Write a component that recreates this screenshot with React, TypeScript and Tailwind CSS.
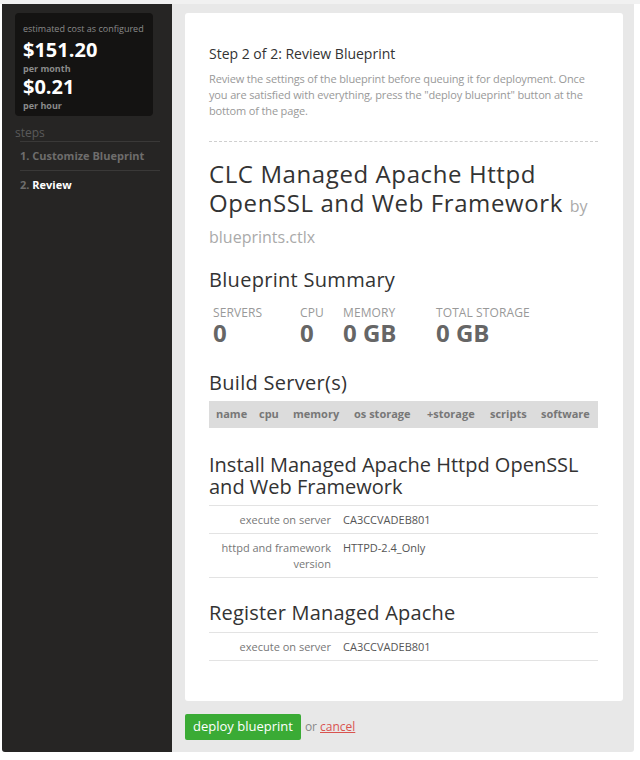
import React from "react";

const font = { fontFamily: '"Open Sans", "Noto Sans", sans-serif' };

function Row({ label, value }: { label: React.ReactNode; value: string }) {
  return (
    <div className="flex border-b border-[#e3e3e3] py-[5.5px] text-[11px] leading-[16px]">
      <div className="w-[122px] shrink-0 text-right text-[#777]">{label}</div>
      <div className="pl-[12px] text-[#555]">{value}</div>
    </div>
  );
}

function Stat({ label, value, w, pl }: { label: string; value: string; w: string; pl?: string }) {
  return (
    <div className={`${w} ${pl ?? ""}`}>
      <div className="text-[12px] leading-[14px] tracking-[0.1px] text-[#999]">{label}</div>
      <div className="text-[24px] font-bold leading-[25px] text-[#666]">{value}</div>
    </div>
  );
}

export default function App() {
  return (
    <div className="min-h-[760px] bg-white" style={font}>
      <div className="h-[4px] bg-[#f1f1f1]" />
      <div className="ml-[2px] flex h-[748px] w-[632px] rounded-b-[3px] bg-[#e8e8e8]">
        <aside className="w-[170px] shrink-0 rounded-bl-[3px] bg-[#262524] pt-[9px]">
          <div className="ml-[13px] w-[138px] rounded-[4px] bg-[#141312] px-[8px] pb-[5px] pt-[10px]">
            <div className="text-[9px] leading-[12px] text-[#8a8a8a]">estimated cost as configured</div>
            <div className="mt-[3px] text-[20px] font-bold leading-[24px] text-white">$151.20</div>
            <div className="mt-[1px] text-[9px] font-bold leading-[11px] text-[#8a8a8a]">per month</div>
            <div className="mt-[1px] text-[20px] font-bold leading-[24px] text-white">$0.21</div>
            <div className="mt-[1px] text-[9px] font-bold leading-[11px] text-[#8a8a8a]">per hour</div>
          </div>
          <div className="ml-[13px] mt-[10px] text-[12px] leading-[14px] text-[#5a5a5a]">steps</div>
          <div className="ml-[18px] mr-[12px] mt-[1px] border-t border-[#3a3938]">
            <div className="border-b border-[#3a3938] py-[6px] text-[11px] font-bold leading-[16px] text-[#6e6d6c]">
              1. Customize Blueprint
            </div>
            <div className="py-[6px] text-[11px] font-bold leading-[16px] text-[#6e6d6c]">
              2. <span className="text-white">Review</span>
            </div>
          </div>
        </aside>
        <main className="flex-1 pl-[13px] pr-[11px] pt-[9px]">
          <div className="rounded-[3px] bg-white pb-[40px] pl-[24px] pr-[25px] pt-[32px]">
            <h2 className="text-[14px] leading-[18px] text-[#333]">Step 2 of 2: Review Blueprint</h2>
            <p className="mt-[8px] text-[11px] leading-[16px] tracking-[-0.15px] text-[#999]">
              Review the settings of the blueprint before queuing it for deployment. Once you are satisfied with
              everything, press the "deploy blueprint" button at the bottom of the page.
            </p>
            <div className="mt-[22px] border-t border-dashed border-[#cfcfcf]" />
            <h1 className="mt-[17px] text-[24px] leading-[29px] tracking-[0.6px] text-[#333]">
              CLC Managed Apache Httpd OpenSSL and Web Framework{" "}
              <span className="text-[16px] leading-[25px] tracking-normal text-[#aaa]">by blueprints.ctlx</span>
            </h1>
            <h3 className="mt-[18px] text-[20px] leading-[24px] tracking-[0.3px] text-[#333]">Blueprint Summary</h3>
            <div className="mt-[14px] flex">
              <Stat label="SERVERS" value="0" w="w-[91px]" pl="pl-[4px]" />
              <Stat label="CPU" value="0" w="w-[43px]" />
              <Stat label="MEMORY" value="0 GB" w="w-[93px]" />
              <Stat label="TOTAL STORAGE" value="0 GB" w="" />
            </div>
            <h3 className="mt-[26px] text-[20px] leading-[24px] tracking-[0.3px] text-[#333]">Build Server(s)</h3>
            <div className="mt-[6px] flex h-[27px] items-center bg-[#dcdcdc] pl-[7px] text-[11px] font-bold text-[#777]">
              <span className="w-[43px]">name</span>
              <span className="w-[34px]">cpu</span>
              <span className="w-[61px]">memory</span>
              <span className="w-[73px]">os storage</span>
              <span className="w-[63px]">+storage</span>
              <span className="w-[51px]">scripts</span>
              <span>software</span>
            </div>
            <h3 className="mt-[26px] border-b border-[#e3e3e3] pb-[7px] text-[20px] leading-[22px] text-[#333]">
              Install Managed Apache Httpd OpenSSL and Web Framework
            </h3>
            <Row label="execute on server" value="CA3CCVADEB801" />
            <Row
              label={
                <>
                  httpd and framework
                  <br />
                  version
                </>
              }
              value="HTTPD-2.4_Only"
            />
            <h3 className="mt-[23px] border-b border-[#e3e3e3] pb-[7px] text-[20px] leading-[24px] tracking-[0.2px] text-[#333]">
              Register Managed Apache
            </h3>
            <Row label="execute on server" value="CA3CCVADEB801" />
          </div>
          <div className="mt-[13px] flex items-center">
            <button className="h-[26px] rounded-[2px] bg-[#3aab35] px-[8px] text-[13px] text-white">
              deploy blueprint
            </button>
            <span className="ml-[4px] text-[12px] text-[#888]">or </span>
            <a className="ml-[3px] text-[12px] text-[#d9534f] underline" href="#">
              cancel
            </a>
          </div>
        </main>
      </div>
    </div>
  );
}
